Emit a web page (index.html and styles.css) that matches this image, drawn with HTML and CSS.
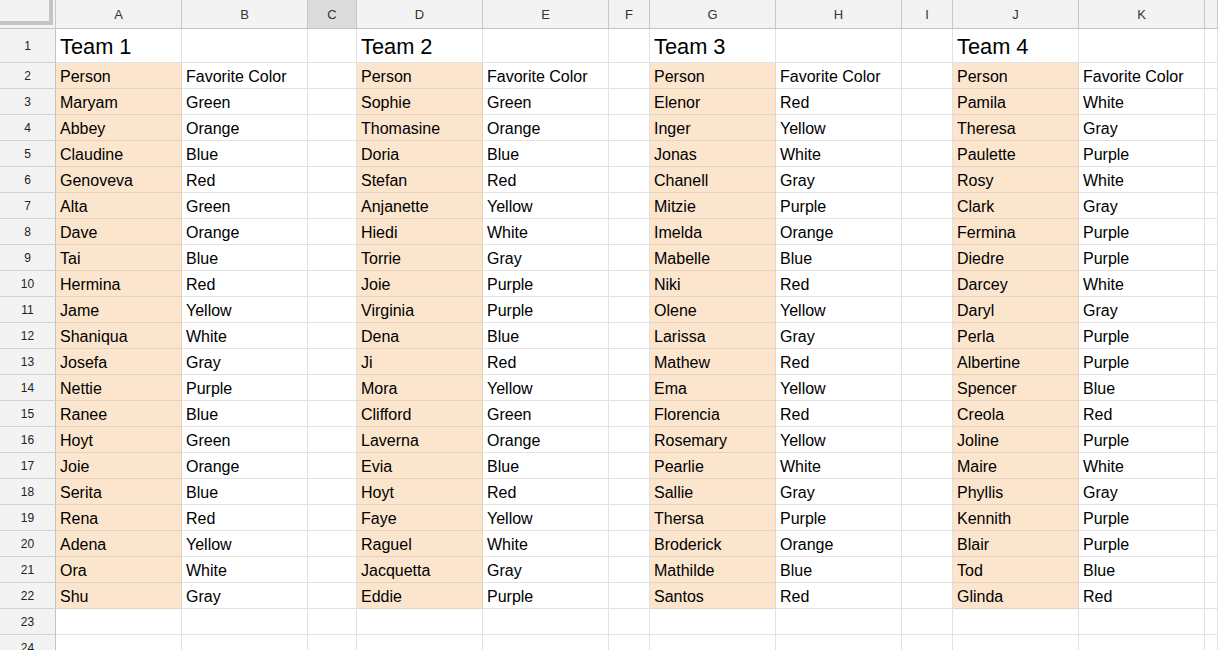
FILE: index.html
```html
<!DOCTYPE html>
<html>
<head>
<meta charset="utf-8">
<link rel="stylesheet" href="styles.css">
</head>
<body>
<div class="sheet">
  <div class="ch corner"><div class="corner-box"></div></div>
  <div class="ch">A</div><div class="ch">B</div><div class="ch sel">C</div><div class="ch">D</div><div class="ch">E</div><div class="ch">F</div><div class="ch">G</div><div class="ch">H</div><div class="ch">I</div><div class="ch">J</div><div class="ch">K</div><div class="ch"></div>

  <div class="rh">1</div><div class="c t">Team 1</div><div class="c"></div><div class="c"></div><div class="c t">Team 2</div><div class="c"></div><div class="c"></div><div class="c t">Team 3</div><div class="c"></div><div class="c"></div><div class="c t">Team 4</div><div class="c"></div><div class="c"></div>
  <div class="rh">2</div><div class="c p">Person</div><div class="c">Favorite Color</div><div class="c"></div><div class="c p">Person</div><div class="c">Favorite Color</div><div class="c"></div><div class="c p">Person</div><div class="c">Favorite Color</div><div class="c"></div><div class="c p">Person</div><div class="c">Favorite Color</div><div class="c"></div>
  <div class="rh">3</div><div class="c p">Maryam</div><div class="c">Green</div><div class="c"></div><div class="c p">Sophie</div><div class="c">Green</div><div class="c"></div><div class="c p">Elenor</div><div class="c">Red</div><div class="c"></div><div class="c p">Pamila</div><div class="c">White</div><div class="c"></div>
  <div class="rh">4</div><div class="c p">Abbey</div><div class="c">Orange</div><div class="c"></div><div class="c p">Thomasine</div><div class="c">Orange</div><div class="c"></div><div class="c p">Inger</div><div class="c">Yellow</div><div class="c"></div><div class="c p">Theresa</div><div class="c">Gray</div><div class="c"></div>
  <div class="rh">5</div><div class="c p">Claudine</div><div class="c">Blue</div><div class="c"></div><div class="c p">Doria</div><div class="c">Blue</div><div class="c"></div><div class="c p">Jonas</div><div class="c">White</div><div class="c"></div><div class="c p">Paulette</div><div class="c">Purple</div><div class="c"></div>
  <div class="rh">6</div><div class="c p">Genoveva</div><div class="c">Red</div><div class="c"></div><div class="c p">Stefan</div><div class="c">Red</div><div class="c"></div><div class="c p">Chanell</div><div class="c">Gray</div><div class="c"></div><div class="c p">Rosy</div><div class="c">White</div><div class="c"></div>
  <div class="rh">7</div><div class="c p">Alta</div><div class="c">Green</div><div class="c"></div><div class="c p">Anjanette</div><div class="c">Yellow</div><div class="c"></div><div class="c p">Mitzie</div><div class="c">Purple</div><div class="c"></div><div class="c p">Clark</div><div class="c">Gray</div><div class="c"></div>
  <div class="rh">8</div><div class="c p">Dave</div><div class="c">Orange</div><div class="c"></div><div class="c p">Hiedi</div><div class="c">White</div><div class="c"></div><div class="c p">Imelda</div><div class="c">Orange</div><div class="c"></div><div class="c p">Fermina</div><div class="c">Purple</div><div class="c"></div>
  <div class="rh">9</div><div class="c p">Tai</div><div class="c">Blue</div><div class="c"></div><div class="c p">Torrie</div><div class="c">Gray</div><div class="c"></div><div class="c p">Mabelle</div><div class="c">Blue</div><div class="c"></div><div class="c p">Diedre</div><div class="c">Purple</div><div class="c"></div>
  <div class="rh">10</div><div class="c p">Hermina</div><div class="c">Red</div><div class="c"></div><div class="c p">Joie</div><div class="c">Purple</div><div class="c"></div><div class="c p">Niki</div><div class="c">Red</div><div class="c"></div><div class="c p">Darcey</div><div class="c">White</div><div class="c"></div>
  <div class="rh">11</div><div class="c p">Jame</div><div class="c">Yellow</div><div class="c"></div><div class="c p">Virginia</div><div class="c">Purple</div><div class="c"></div><div class="c p">Olene</div><div class="c">Yellow</div><div class="c"></div><div class="c p">Daryl</div><div class="c">Gray</div><div class="c"></div>
  <div class="rh">12</div><div class="c p">Shaniqua</div><div class="c">White</div><div class="c"></div><div class="c p">Dena</div><div class="c">Blue</div><div class="c"></div><div class="c p">Larissa</div><div class="c">Gray</div><div class="c"></div><div class="c p">Perla</div><div class="c">Purple</div><div class="c"></div>
  <div class="rh">13</div><div class="c p">Josefa</div><div class="c">Gray</div><div class="c"></div><div class="c p">Ji</div><div class="c">Red</div><div class="c"></div><div class="c p">Mathew</div><div class="c">Red</div><div class="c"></div><div class="c p">Albertine</div><div class="c">Purple</div><div class="c"></div>
  <div class="rh">14</div><div class="c p">Nettie</div><div class="c">Purple</div><div class="c"></div><div class="c p">Mora</div><div class="c">Yellow</div><div class="c"></div><div class="c p">Ema</div><div class="c">Yellow</div><div class="c"></div><div class="c p">Spencer</div><div class="c">Blue</div><div class="c"></div>
  <div class="rh">15</div><div class="c p">Ranee</div><div class="c">Blue</div><div class="c"></div><div class="c p">Clifford</div><div class="c">Green</div><div class="c"></div><div class="c p">Florencia</div><div class="c">Red</div><div class="c"></div><div class="c p">Creola</div><div class="c">Red</div><div class="c"></div>
  <div class="rh">16</div><div class="c p">Hoyt</div><div class="c">Green</div><div class="c"></div><div class="c p">Laverna</div><div class="c">Orange</div><div class="c"></div><div class="c p">Rosemary</div><div class="c">Yellow</div><div class="c"></div><div class="c p">Joline</div><div class="c">Purple</div><div class="c"></div>
  <div class="rh">17</div><div class="c p">Joie</div><div class="c">Orange</div><div class="c"></div><div class="c p">Evia</div><div class="c">Blue</div><div class="c"></div><div class="c p">Pearlie</div><div class="c">White</div><div class="c"></div><div class="c p">Maire</div><div class="c">White</div><div class="c"></div>
  <div class="rh">18</div><div class="c p">Serita</div><div class="c">Blue</div><div class="c"></div><div class="c p">Hoyt</div><div class="c">Red</div><div class="c"></div><div class="c p">Sallie</div><div class="c">Gray</div><div class="c"></div><div class="c p">Phyllis</div><div class="c">Gray</div><div class="c"></div>
  <div class="rh">19</div><div class="c p">Rena</div><div class="c">Red</div><div class="c"></div><div class="c p">Faye</div><div class="c">Yellow</div><div class="c"></div><div class="c p">Thersa</div><div class="c">Purple</div><div class="c"></div><div class="c p">Kennith</div><div class="c">Purple</div><div class="c"></div>
  <div class="rh">20</div><div class="c p">Adena</div><div class="c">Yellow</div><div class="c"></div><div class="c p">Raguel</div><div class="c">White</div><div class="c"></div><div class="c p">Broderick</div><div class="c">Orange</div><div class="c"></div><div class="c p">Blair</div><div class="c">Purple</div><div class="c"></div>
  <div class="rh">21</div><div class="c p">Ora</div><div class="c">White</div><div class="c"></div><div class="c p">Jacquetta</div><div class="c">Gray</div><div class="c"></div><div class="c p">Mathilde</div><div class="c">Blue</div><div class="c"></div><div class="c p">Tod</div><div class="c">Blue</div><div class="c"></div>
  <div class="rh">22</div><div class="c p">Shu</div><div class="c">Gray</div><div class="c"></div><div class="c p">Eddie</div><div class="c">Purple</div><div class="c"></div><div class="c p">Santos</div><div class="c">Red</div><div class="c"></div><div class="c p">Glinda</div><div class="c">Red</div><div class="c"></div>
  <div class="rh">23</div><div class="c"></div><div class="c"></div><div class="c"></div><div class="c"></div><div class="c"></div><div class="c"></div><div class="c"></div><div class="c"></div><div class="c"></div><div class="c"></div><div class="c"></div><div class="c"></div>
  <div class="rh">24</div><div class="c"></div><div class="c"></div><div class="c"></div><div class="c"></div><div class="c"></div><div class="c"></div><div class="c"></div><div class="c"></div><div class="c"></div><div class="c"></div><div class="c"></div><div class="c"></div>
</div>
</body>
</html>
```
FILE: styles.css
```css
html, body {
  margin: 0;
  padding: 0;
  background: #ffffff;
  overflow: hidden;
}

.sheet {
  display: grid;
  grid-template-columns: 56px 126px 126px 49px 126px 126px 41px 126px 126px 51px 126px 126px 1fr;
  grid-template-rows: 29px 34px;
  grid-auto-rows: 26px;
  width: 1218px;
  height: 650px;
  overflow: hidden;
  font-family: "Liberation Sans", Arial, sans-serif;
  color: #000;
}

.ch {
  box-sizing: border-box;
  background: #f3f3f3;
  border-right: 1px solid #c8c8c8;
  border-bottom: 1px solid #c4c4c4;
  display: flex;
  align-items: center;
  justify-content: center;
  font-size: 13px;
  color: #333;
  padding-top: 1px;
}

.ch.sel {
  background: #dcdcdc;
}

.corner {
  align-items: flex-start;
  justify-content: flex-start;
  padding: 0;
}

.corner-box {
  width: 49px;
  height: 21px;
  background: #f3f3f3;
  border-right: 4px solid #c4c4c4;
  border-bottom: 4px solid #c4c4c4;
}

.rh {
  box-sizing: border-box;
  background: #f3f3f3;
  border-right: 1px solid #c4c4c4;
  border-bottom: 1px solid #d4d4d4;
  display: flex;
  align-items: center;
  justify-content: center;
  font-size: 12px;
  color: #222;
  padding-top: 1px;
}

.c {
  box-sizing: border-box;
  border-right: 1px solid #e2e2e2;
  border-bottom: 1px solid #e2e2e2;
  display: flex;
  align-items: flex-end;
  padding: 0 3px 2px 4px;
  font-size: 16px;
  line-height: 18px;
  white-space: nowrap;
  overflow: hidden;
}

.c.p {
  background: #fce5cd;
  border-color: #e5d3bf;
}

.c.t {
  font-size: 21.8px;
  line-height: 25px;
  padding-bottom: 3px;
}
```
